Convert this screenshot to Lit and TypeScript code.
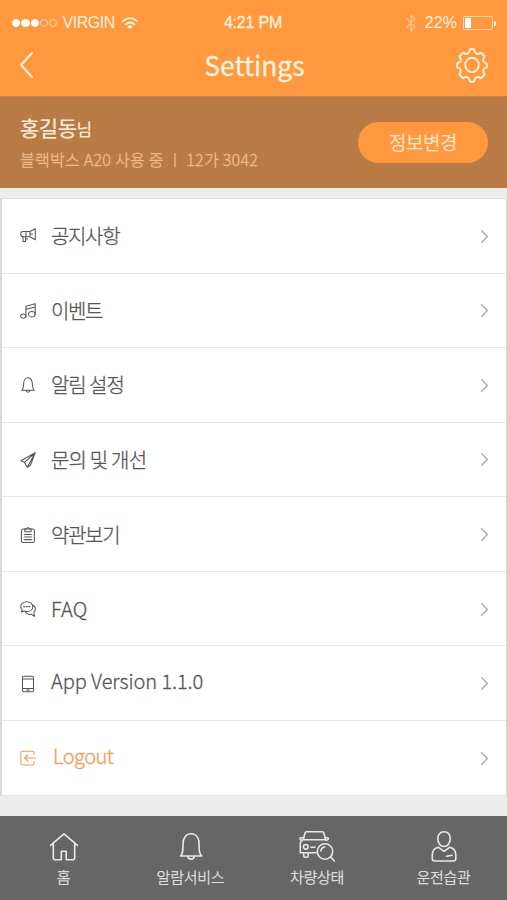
import { LitElement, html, css, svg } from "lit";
import { customElement } from "lit/decorators.js";
import { classMap } from "lit/directives/class-map.js";

const icons: Record<string, unknown> = {
  notice: svg`<path d="M10 3.500H3.200Q.7 3.500.7 6T3.200 8.700h6.800zM10 3.500 15.300.8v11L10 8.700M3 8.700v4.800h2.600V8.700M5.800 8.700v2.300h1.700M6 3.500v5M10 6h2.500"/>`,
  event: svg`<ellipse cx="3.300" cy="13.100" rx="2.700" ry="2.200"/><ellipse cx="11.800" cy="11.200" rx="3.300" ry="2.800"/><path d="M5.900 13V3.200L15.200.8v10.400M5.900 6.200l9.300-2.100"/>`,
  alarm: svg`<path d="M1.800 13.300h12.400c-1.500-1.400-1.800-2.700-1.800-6C12.400 3.400 10.700.8 8 .8S3.600 3.400 3.600 7.300c0 3.300-.3 4.600-1.800 6zM6.200 14q1.800 2.500 3.600 0"/>`,
  send: svg`<path d="M15.200.8.9 8.700l3.500 1.700 3 4.800 3.100-2.200zM15.200.8 4.400 10.400M15.200.8 7.400 15"/>`,
  terms: svg`<rect x="1.400" y="2" width="13" height="13.500" rx="1.800"/><path d="M4.800 2v2.800h6.300V2H9.800Q8-.4 6.200 2zM4.500 7.500h7M4.500 10h7M4.500 12.600h7"/>`,
  faq: svg`<path d="M6.800.8c3.400 0 6 2.100 6 4.900s-2.600 4.800-6 4.800c-1 0-2-.2-2.800-.5L1.600 11l.7-2.200C1.300 7.900.7 6.900.7 5.700.7 2.900 3.400.8 6.800.8zM13.300 4.300c2.700 1.900 2.700 5.100.5 7.100l.6 4-3.100-2.200c-2.700.6-4.700-.3-5.700-2"/><path d="M3.700 5.600h1M6.300 5.600h1M8.900 5.600h1"/>`,
  phone: svg`<rect x="2.500" y=".3" width="11" height="15.500" rx="1.500"/><path d="M2.500 3h11M2.500 12.400h11M6.800 14.100h2.400"/>`,
  logout: svg`<path d="M14 4.300V2.800Q14 1.200 12.300 1.200H2.600Q.9 1.200.9 2.800v10.500q0 1.600 1.700 1.600h9.700Q14 14.900 14 13.300v-1.500M15.500 8H4.800M8 4.800 4.700 8 8 11.200"/>`,
};

const rows = [
  { icon: "notice", label: "공지사항" },
  { icon: "event", label: "이벤트" },
  { icon: "alarm", label: "알림 설정" },
  { icon: "send", label: "문의 및 개선" },
  { icon: "terms", label: "약관보기" },
  { icon: "faq", label: "FAQ" },
  { icon: "phone", label: "App Version 1.1.0" },
  { icon: "logout", label: "Logout" },
];

const tabs = [
  { key: "home", label: "홈", art: svg`<path d="M1.500 13.300 15 1.800l13.500 11.500M4.300 11.500v14.200q0 2 2 2h6v-8.500h4.900v8.500h6.500q2 0 2-2V11.500"/>` },
  { key: "bell", label: "알람서비스", art: svg`<path d="M4.500 24h21.400c-2.600-2.100-2.800-5-2.800-12 0-6.300-3.200-10.300-8-10.300S7 5.700 7 12c0 7-.1 9.900-2.500 12zM11.800 24.300c.5 3.700 6 3.700 6.600 0"/>` },
  { key: "car", label: "차량상태", art: svg`<path d="M4.200 8.700 6 2q.3-1.200 1.500-1.200h15.800q1.200 0 1.500 1.200l1.800 6.700zM4 6.800H1.800Q.6 6.800 1 8t2.200 1.400M26.500 6.800h2q1.200 0 .8 1.200t-2.300 1.400M3.200 9.400Q1.300 10.500 1.300 12.500v9.300H17M4.700 23v1.800q0 1.500 1.500 1.500h1.500q1.500 0 1.500-1.500V23M12 16.300h4"/><circle cx="6.800" cy="15.800" r="2.300"/><circle cx="26" cy="20.500" r="7.700"/><path d="m31.600 26 3.800 4M21.800 20q.4-3.300 3.800-4"/>` },
  { key: "driver", label: "운전습관", art: svg`<path d="M15 .8c3.800 0 6.200 2.700 6.200 6.900S18.700 15.500 15 15.500 8.800 11.900 8.800 7.700 11.200.8 15 .8zM9.500 16.300C4.900 17.300 3.300 20 3.300 24v3.500q0 2.500 2.500 2.500h18.500q2.500 0 2.500-2.500V24c0-4-1.600-6.700-6.200-7.700L15 20.300zM17.500 25.300l5.500-1"/>` },
];

@customElement("app-root")
export class AppRoot extends LitElement {
  static styles = css`
    :host { display: flex; flex-direction: column; width: 507px; height: 900px; overflow: hidden; background: #ededed;
      font-family: "Noto Sans CJK KR", "Noto Sans", sans-serif; font-weight: 300; }
    * { box-sizing: border-box; }
    svg { display: block; flex: none; fill: none; stroke: currentColor; stroke-linecap: round; stroke-linejoin: round; overflow: visible; }
    .top { height: 96px; background: #ff983f; color: #fff3df; }
    .status { height: 44px; padding: 2px 11px 0 12px; display: grid; grid-template-columns: 1fr auto 1fr; align-items: center;
      font: 400 16px/20px "Liberation Sans", sans-serif; }
    .group { display: flex; align-items: center; }
    .group.end { justify-content: flex-end; }
    .signal { display: flex; gap: 1px; margin-right: 5px; }
    .dot { width: 8.300px; height: 8.300px; border-radius: 50%; border: 1px solid #ffd5aa; }
    .dot.on { background: #fff; border-color: #fff; }
    .carrier { letter-spacing: -0.450px; margin-right: 7px; }
    .clock { letter-spacing: -0.200px; -webkit-text-stroke: 0.300px; margin-right: 2px; }
    .bt { opacity: .5; margin-right: 9px; }
    .percent { margin-right: 6px; letter-spacing: .1px; }
    .battery { width: 30px; height: 14px; border: 1px solid #ffd9b1; border-radius: 2px; padding: 1px; }
    .charge { width: 6px; height: 10px; background: #fff; }
    .nub { width: 2px; height: 5px; background: #fff3df; border-radius: 0 2px 2px 0; margin-left: 1px; }
    .nav { height: 42px; padding: 0 19px 0 20px; display: grid; grid-template-columns: 1fr auto 1fr; align-items: center; }
    .nav .gear { justify-self: end; }
    h1 { margin: 0 0 0 1px; font: 400 26.500px/40px "Noto Sans CJK KR", sans-serif; letter-spacing: 0; -webkit-text-stroke: .3px; }
    .profile { height: 92px; padding: 0 19px 0 20px; display: flex; align-items: center; justify-content: space-between; border-top: 1px solid #cb8447;
      background: repeating-linear-gradient(90deg, transparent 0 7px, rgba(217,143,79,.1) 7px 8px),
        repeating-linear-gradient(0deg, transparent 0 7px, rgba(217,143,79,.1) 7px 8px), #b87b46; }
    .name { font-size: 21px; line-height: 31px; font-weight: 400; color: #ffeddb; letter-spacing: -.5px; -webkit-text-stroke: .2px; }
    .name .suffix { font-size: 17px; }
    .detail { font-size: 16px; line-height: 30px; color: #efbd8f; letter-spacing: .27px; white-space: pre; -webkit-text-stroke: .3px; }
    .edit { width: 130px; height: 41px; border: 0; border-radius: 21px; padding: 0 0 2px; background: #ff983f; color: #fff0dd;
      font: 300 19px/39px "Noto Sans CJK KR", sans-serif; letter-spacing: -.500px; -webkit-text-stroke: .3px; }
    .list { margin-top: 10px; height: 597.500px; flex: none; display: grid; grid-template-rows: repeat(8, 1fr); background: #fff;
      border-left: 2px solid #dadada; border-right: 1px solid #d9d9d9; border-top: 1px solid #dedede; }
    .row { display: flex; align-items: center; padding: 0 18px 0 18px; color: #565656; border-bottom: 1.500px solid #e6e6e6; }
    .row .glyph { margin-top: 1px; stroke-width: 1.050; }
    .label { margin-left: 15px; flex: 1; font-size: 20px; line-height: 30px; letter-spacing: -1.350px; margin-top: 1px; -webkit-text-stroke: .3px; }
    .label.alarm { letter-spacing: -1.050px; }
    .label.send { letter-spacing: -.800px; }
    .label.faq { letter-spacing: .2px; }
    .label.phone { letter-spacing: -.080px; margin-top: -4px; }
    .label.logout { letter-spacing: -.500px; margin-left: 17px; margin-top: -3px; }
    .row.accent { color: #f69a50; }
    .chevron { color: #aaa; stroke-width: 1.400; margin-top: 1px; }
    .tabs { margin-top: auto; height: 84px; flex: none; background: #666; color: #e8e8e8; display: grid;
      grid-template-columns: 127px 127px 126px 127px; padding-top: 15px; }
    .tab { display: flex; flex-direction: column; align-items: center; font-size: 15px; line-height: 22px; letter-spacing: -.250px; gap: 3px; -webkit-text-stroke: .25px; }
    .tab svg { stroke-width: 1.600; }
    .tab .home, .tab .bell { margin: 1px 0 -1px; }
  `;

  render() {
    return html`
      <header class="top">
        <div class="status">
          <div class="group">
            <div class="signal">${[1, 1, 1, 0, 0].map((on) => html`<i class=${classMap({ dot: true, on: !!on })}></i>`)}</div>
            <span class="carrier">VIRGIN</span>
            <svg width="16" height="13" viewBox="0 0 16 13" stroke-width="1.800"><path d="M1 4q7-5.800 14 0M3.700 7.200q4.300-3.500 8.600 0"/><path d="m8 11-1.500-1.500q1.500-1 3 0z" fill="currentColor"/></svg>
          </div>
          <span class="clock">4:21 PM</span>
          <div class="group end">
            <svg class="bt" width="10" height="18" viewBox="0 0 10 18" stroke-width="1.200"><path d="m.8 4.500 8 8.500L5 17V1l3.800 4-8 8.500"/></svg>
            <span class="percent">22%</span>
            <div class="battery"><div class="charge"></div></div><i class="nub"></i>
          </div>
        </div>
        <div class="nav">
          <svg width="13" height="26" viewBox="0 0 13 26" stroke-width="2"><path d="M12 1 1 13l11 12"/></svg>
          <h1>Settings</h1>
          <svg class="gear" width="32" height="34" viewBox="0 0 34 34" preserveAspectRatio="none" stroke-width="2"><circle cx="17" cy="17" r="7.200"/>
            <path d="M14.800 1.200h4.400q.9 3.900 2.700 4.600t4.800-1.100l3.600 3.600q-1.900 3.200-1.200 4.900t3.700 2.400v3.800q-3 .7-3.700 2.400t1.200 4.900l-3.600 3.600q-3-1.800-4.800-1.100t-2.700 4.600h-4.400q-.9-3.900-2.700-4.600t-4.800 1.100l-3.600-3.600q1.900-3.200 1.200-4.900T1.200 19.400v-4.200q3-.7 3.700-2.300T3.700 8.300l3.600-3.600q3 1.800 4.800 1.100t2.700-4.600z"/></svg>
        </div>
      </header>
      <section class="profile">
        <div>
          <div class="name">홍길동<span class="suffix">님</span></div>
          <div class="detail">블랙박스 A20 사용 중 ㅣ 12가 3042</div>
        </div>
        <button class="edit">정보변경</button>
      </section>
      <main class="list">
        ${rows.map((r) => html`
          <div class=${classMap({ row: true, accent: r.icon === "logout" })}>
            <svg class="glyph" width="16" height="16" viewBox="0 0 16 16">${icons[r.icon]}</svg>
            <span class="label ${r.icon}">${r.label}</span>
            <svg class="chevron" width="7" height="13" viewBox="0 0 7 13"><path d="m.8.8 5.500 5.700-5.500 5.700"/></svg>
          </div>`)}
      </main>
      <nav class="tabs">
        ${tabs.map((t) => html`
          <div class="tab">
            <svg class=${t.key} width=${t.key === "car" ? 36 : 30} height="32" viewBox=${t.key === "car" ? "0 0 36 32" : "0 0 30 32"}>${t.art}</svg>
            <span>${t.label}</span>
          </div>`)}
      </nav>
    `;
  }
}
